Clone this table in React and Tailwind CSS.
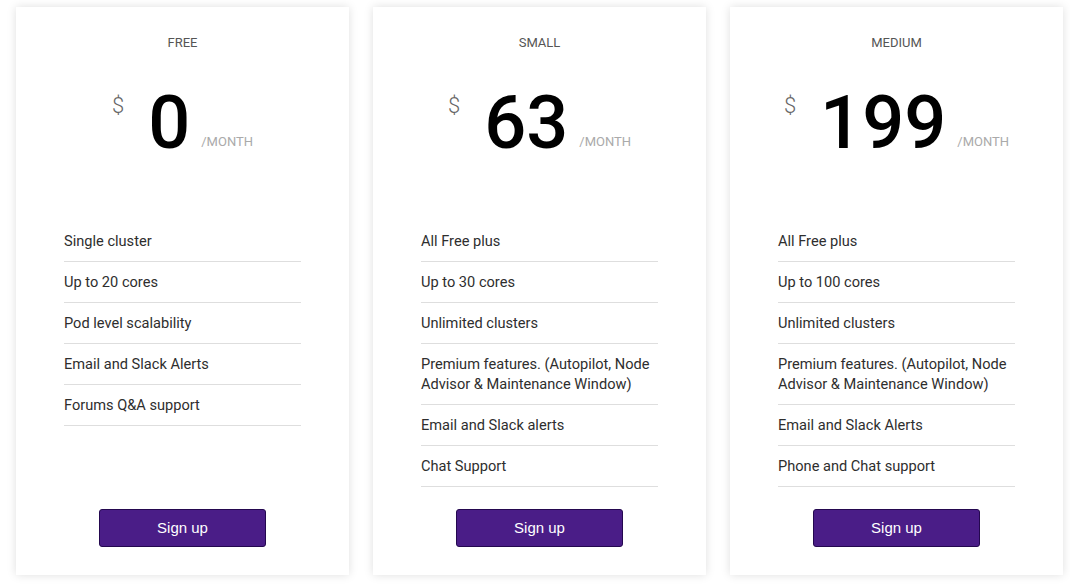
import React from 'react';

const plans = [
    {
        name: 'FREE',
        price: '0',
        features: ['Single cluster', 'Up to 20 cores', 'Pod level scalability', 'Email and Slack Alerts', 'Forums Q&A support'],
    },
    {
        name: 'SMALL',
        price: '63',
        features: [
            'All Free plus',
            'Up to 30 cores',
            'Unlimited clusters',
            'Premium features. (Autopilot, Node Advisor & Maintenance Window)',
            'Email and Slack alerts',
            'Chat Support',
        ],
    },
    {
        name: 'MEDIUM',
        price: '199',
        features: [
            'All Free plus',
            'Up to 100 cores',
            'Unlimited clusters',
            'Premium features. (Autopilot, Node Advisor & Maintenance Window)',
            'Email and Slack Alerts',
            'Phone and Chat support',
        ],
    },
];

const PlanCard = ({ plan }) => (
    <div className="w-[333px] bg-white shadow-[0_0_9px_rgba(0,0,0,0.13)] flex flex-col pt-[28px] pb-[28px] px-[48px]">
        <div className="text-center text-[13px] leading-[16px] text-[#555] font-['Roboto',sans-serif]">{plan.name}</div>

        <div className="mt-[35px] flex justify-center items-start font-['Roboto',sans-serif]">
            <span className="mt-[9px] text-[22px] leading-none text-[#666] font-light">$</span>
            <span className="ml-[24px] text-[74px] leading-none text-black font-medium">{plan.price}</span>
            <span className="ml-[11px] mt-[49px] text-[13px] leading-none text-[#aaa]">/MONTH</span>
        </div>

        <ul className="mt-[61px] flex-1 font-['Roboto',sans-serif] text-[14.6px] leading-[20px] text-[#2e2e2e]">
            {plan.features.map((f) => (
                <li key={f} className="py-[10px] border-b border-[#dedede]">
                    {f}
                </li>
            ))}
        </ul>

        <button className="mt-[22px] self-center w-[167px] h-[38px] rounded-[3px] bg-[#4a1d87] border border-[#24084f] text-white text-[15px] font-['Liberation_Sans',sans-serif]">
            Sign up
        </button>
    </div>
);

const App = () => {
    return (
        <div className="w-[1070px] h-[585px] bg-white pl-[16px] pt-[7px] flex items-start">
            <div className="flex gap-[24px] items-stretch">
                {plans.map((p) => (
                    <PlanCard key={p.name} plan={p} />
                ))}
            </div>
        </div>
    );
};

export default App;
